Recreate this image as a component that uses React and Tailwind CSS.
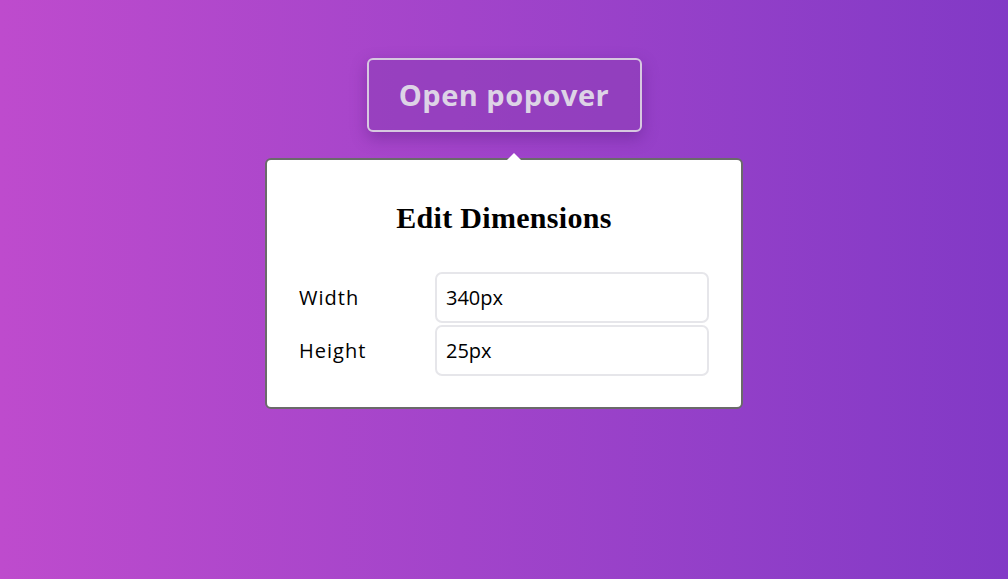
import React from 'react';

export default function App() {
  return (
    <div
      className="w-full h-[579px] bg-gradient-to-r from-[#be4bcd] to-[#8239c6] flex flex-col items-center"
      style={{ fontFamily: '"Open Sans", Lato, sans-serif' }}
    >
      <button className="mt-[58px] w-[275px] h-[74px] rounded-[6px] border-2 border-[#d7c8e0] bg-[#8e3db8]/60 text-[29px] font-bold tracking-[0.5px] text-[#ddd3e6] shadow-[0_6px_16px_rgba(70,20,110,0.35)]">
        Open popover
      </button>

      <div className="relative mt-[26px] w-[478px] h-[251px] rounded-[6px] border-2 border-[#6a6a6a] bg-white px-[32px] pt-[43px]">
        <div className="absolute -top-[7px] left-[240px] w-0 h-0 border-x-[7px] border-x-transparent border-b-[7px] border-b-white" />
        <h2
          className="text-center text-[30px] font-bold text-black leading-none tracking-[0.3px]"
          style={{ fontFamily: '"Liberation Serif", "DejaVu Serif", serif' }}
        >
          Edit Dimensions
        </h2>
        <div className="mt-[39px] flex flex-col gap-[2px]">
          <div className="flex items-center">
            <label className="w-[138px] text-[20px] tracking-[1px] text-black">Width</label>
            <input
              defaultValue="340px"
              className="w-[274px] h-[51px] rounded-[7px] border-2 border-[#e6e6ea] px-[9px] text-[20px] text-black outline-none"
            />
          </div>
          <div className="flex items-center">
            <label className="w-[138px] text-[20px] tracking-[1px] text-black">Height</label>
            <input
              defaultValue="25px"
              className="w-[274px] h-[51px] rounded-[7px] border-2 border-[#e6e6ea] px-[9px] text-[20px] text-black outline-none"
            />
          </div>
        </div>
      </div>
    </div>
  );
}
